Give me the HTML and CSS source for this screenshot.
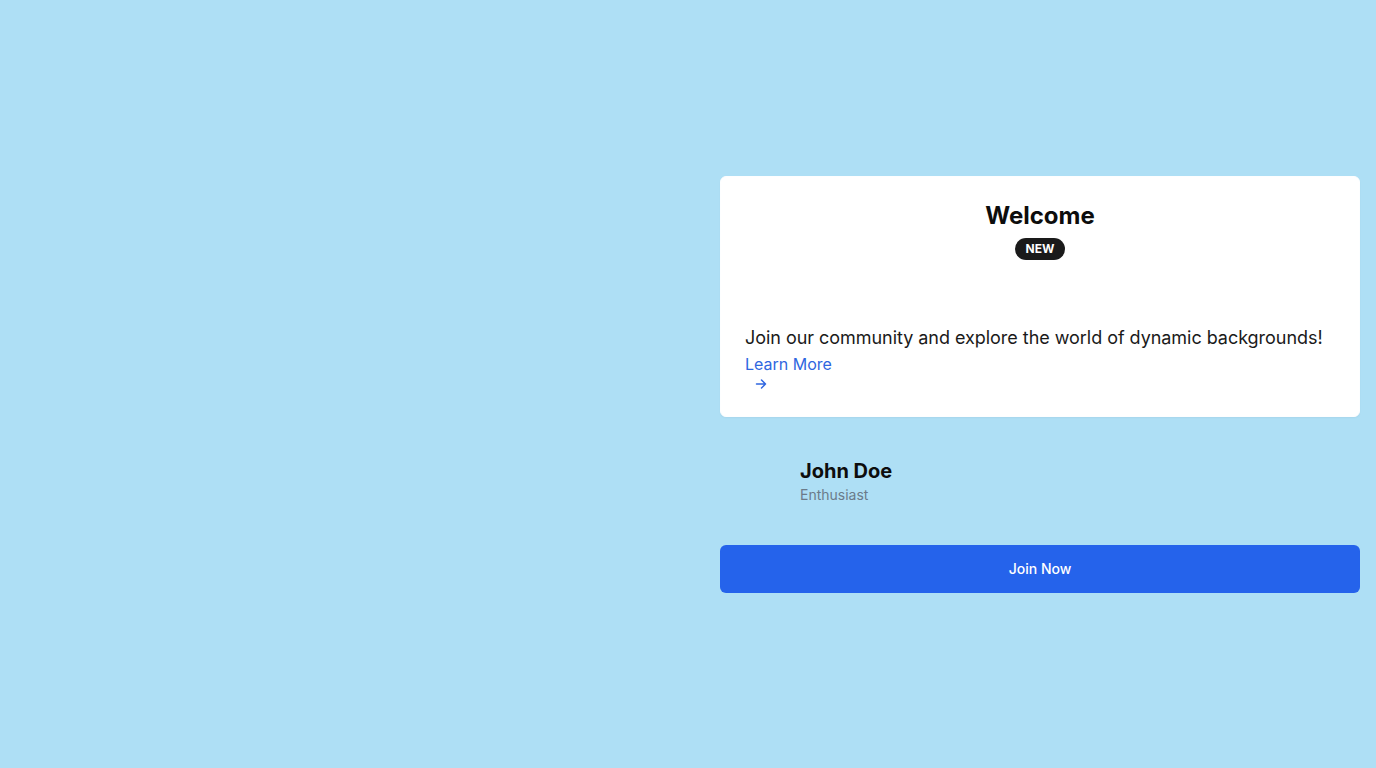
FILE: index.html
```html
<!DOCTYPE html>
<html lang="en">
<head>
<meta charset="utf-8">
<title>Welcome</title>
<link rel="stylesheet" href="styles.css">
</head>
<body>
<main class="page">
  <div class="spacer"></div>
  <section class="stack">
    <article class="card">
      <header class="card-head">
        <h2 class="title">Welcome</h2>
        <span class="badge">NEW</span>
      </header>
      <p class="lead">Join our community and explore the world of dynamic backgrounds!</p>
      <a class="link" href="#">Learn More</a>
      <svg class="arrow" width="16" height="16" viewBox="0 0 16 16" fill="none" stroke="currentColor" stroke-width="1.5" stroke-linecap="round" stroke-linejoin="round"><path d="M3.5 8h9M8.5 4l4 4-4 4"/></svg>
    </article>
    <div class="profile">
      <div class="avatar"></div>
      <div class="who">
        <div class="name">John Doe</div>
        <div class="role">Enthusiast</div>
      </div>
    </div>
    <button class="cta" type="button">Join Now</button>
  </section>
</main>
</body>
</html>
```

FILE: styles.css
```css
* { box-sizing: border-box; }
html, body { margin: 0; padding: 0; }
body {
  background: #aedff5;
  font-family: Inter, "Noto Sans", sans-serif;
  color: #111;
}
.page {
  min-height: 100vh;
  display: grid;
  grid-template-columns: 1fr 640px;
  column-gap: 32px;
  padding-right: 16px;
  align-items: center;
}
.stack {
  display: flex;
  flex-direction: column;
  gap: 24px;
}
.card {
  background: #fff;
  border: 1px solid #fdfeff;
  border-radius: 6px;
  padding: 23px 24px 24px;
  height: 241px;
  box-shadow: 0 1px 2px rgba(0,0,0,0.04);
}
.card-head {
  display: flex;
  flex-direction: column;
  align-items: center;
}
.title {
  margin: 0;
  font-size: 24px;
  line-height: 32px;
  font-weight: 700;
  color: #0d0d0d;
}
.badge {
  margin-top: 6px;
  background: #1a1a1a;
  color: #fff;
  font-size: 12px;
  line-height: 16px;
  font-weight: 700;
  padding: 3px 11px;
  border-radius: 999px;
}
.lead {
  margin: 64px 0 0;
  font-size: 18px;
  line-height: 28px;
  letter-spacing: -0.04px;
  color: #1a1a1a;
}
.link {
  display: block;
  font-size: 16px;
  line-height: 24px;
  color: #2f66e0;
  text-decoration: none;
  width: max-content;
}
.arrow {
  display: block;
  margin-left: 8px;
  color: #2f66e0;
}
.profile {
  display: flex;
  align-items: center;
  gap: 16px;
  padding: 16px;
  height: 80px;
}
.avatar {
  width: 48px;
  height: 48px;
  flex: none;
}
.name {
  font-size: 20px;
  line-height: 28px;
  font-weight: 700;
  color: #0d0d0d;
}
.role {
  font-size: 14px;
  line-height: 20px;
  color: #6b7b8a;
}
.cta {
  height: 48px;
  border: 0;
  border-radius: 6px;
  background: #2563eb;
  color: #fff;
  font-family: inherit;
  font-size: 14px;
  font-weight: 500;
  cursor: pointer;
}
```
